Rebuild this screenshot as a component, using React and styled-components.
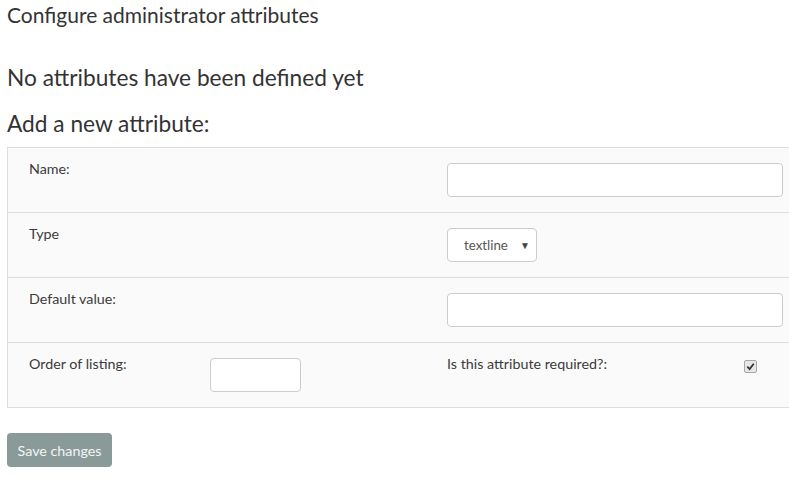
import React from "react";
import styled, { createGlobalStyle } from "styled-components";

const Global = createGlobalStyle`
  html, body {
    margin: 0;
    padding: 0;
    overflow: hidden;
    background: #fff;
  }
  body {
    font-family: "Lato", "Liberation Sans", sans-serif;
    color: #333;
  }
`;

const Page = styled.div`
  padding: 0 0 0 7px;
  width: 820px;
`;

const Title = styled.div`
  font-size: 21px;
  line-height: 24px;
  padding-top: 3px;
  color: #333;
`;

const Heading = styled.div`
  font-size: 22.7px;
  line-height: 26px;
  margin-top: ${(p) => p.top}px;
  color: #333;
`;

const Table = styled.div`
  margin-top: 10px;
  border: 1px solid #ddd;
  border-right: none;
  background: #fafafa;
`;

const Row = styled.div`
  display: grid;
  grid-template-columns: 202px 237px 336px 1fr;
  height: ${(p) => (p.first ? 64 : 65)}px;
  border-top: ${(p) => (p.first ? "none" : "1px solid #ddd")};
  box-sizing: border-box;
  padding-top: 15px;
`;

const Label = styled.div`
  font-size: 14.3px;
  line-height: 16px;
  margin-top: -2px;
  padding-left: ${(p) => p.pad || 0}px;
  color: #3a3a3a;
  grid-column: ${(p) => p.col || "auto"};
`;

const Input = styled.div`
  box-sizing: border-box;
  height: 34px;
  width: ${(p) => p.w}px;
  background: #fff;
  border: 1px solid #ccc;
  border-radius: 4px;
  grid-column: ${(p) => p.col || "auto"};
`;

const Select = styled.div`
  grid-column: 3;
  box-sizing: border-box;
  height: 34px;
  width: 90px;
  background: #fff;
  border: 1px solid #ccc;
  border-radius: 4px;
  display: flex;
  align-items: center;
  justify-content: space-between;
  padding: 0 6px 0 16px;
  font-size: 13.3px;
  color: #555;
`;

const Arrow = styled.span`
  font-size: 10px;
  color: #444;
`;

const CheckCell = styled.div`
  margin-left: -39px;
  padding-top: 2px;
`;

const Check = styled.div`
  width: 11px;
  height: 11px;
  border: 1px solid #a8a8a8;
  border-radius: 2px;
  background: #e6e6e6;
  display: flex;
  align-items: center;
  justify-content: center;
`;

const Button = styled.div`
  margin-top: 25px;
  width: 105px;
  height: 34px;
  box-sizing: border-box;
  background: #8a9a99;
  border-radius: 4px;
  color: #f3f5f5;
  font-size: 14.3px;
  display: flex;
  align-items: center;
  justify-content: center;
`;

export default function App() {
  return (
    <>
      <Global />
      <Page>
        <Title>Configure administrator attributes</Title>
        <Heading top={38}>No attributes have been defined yet</Heading>
        <Heading top={20}>Add a new attribute:</Heading>
        <Table>
          <Row first>
            <Label pad={21} col="1 / 3">Name:</Label>
            <Input w={336} col={3} />
          </Row>
          <Row>
            <Label pad={21} col="1 / 3">Type</Label>
            <Select>
              textline <Arrow>▼</Arrow>
            </Select>
          </Row>
          <Row>
            <Label pad={21} col="1 / 3">Default value:</Label>
            <Input w={336} col={3} />
          </Row>
          <Row>
            <Label pad={21}>Order of listing:</Label>
            <Input w={91} />
            <Label>Is this attribute required?:</Label>
            <CheckCell>
              <Check>
                <svg width="9" height="9" viewBox="0 0 10 10">
                  <path d="M1.5 5.2 L4 7.8 L8.6 2" fill="none" stroke="#333" strokeWidth="2" />
                </svg>
              </Check>
            </CheckCell>
          </Row>
        </Table>
        <Button>Save changes</Button>
      </Page>
    </>
  );
}
